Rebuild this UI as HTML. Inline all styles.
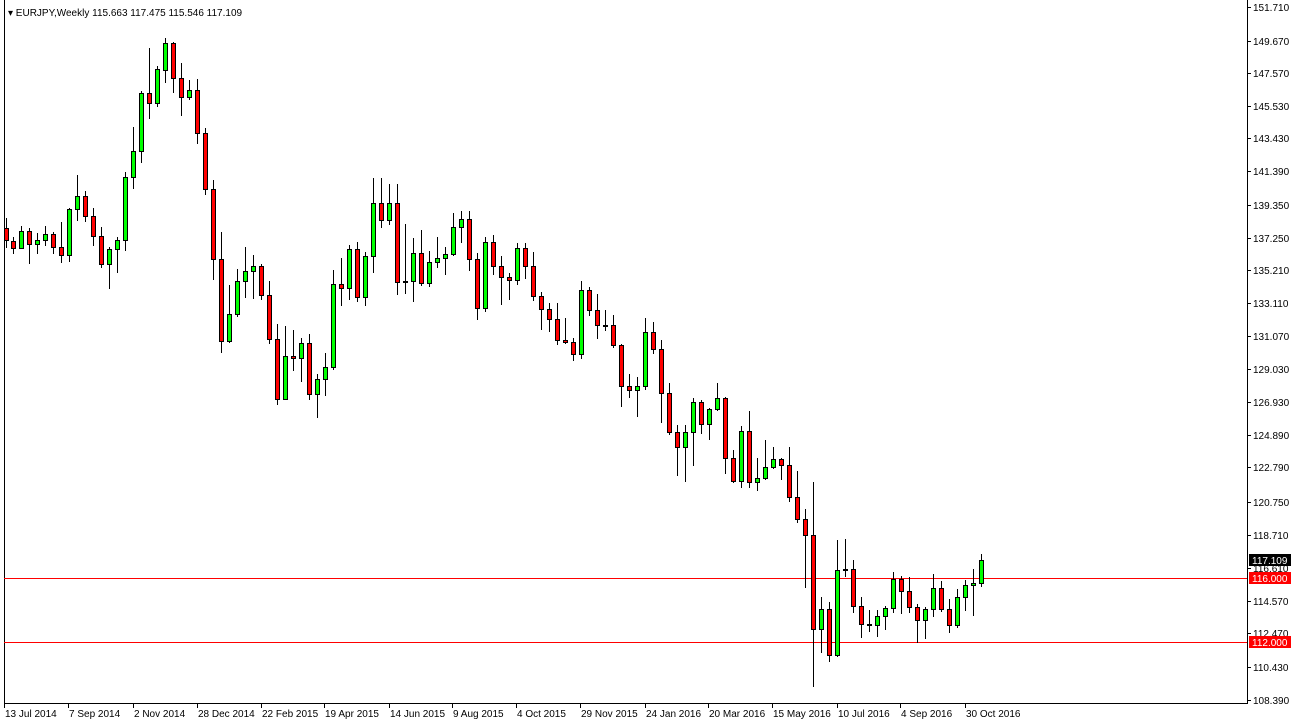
<!DOCTYPE html>
<html><head><meta charset="utf-8"><style>
html,body{margin:0;padding:0;background:#fff;width:1292px;height:726px;overflow:hidden}
svg{display:block}
text{font-family:"Liberation Sans",sans-serif;font-size:10px;fill:#000}
</style></head><body>
<svg id="s" width="1292" height="726" xmlns="http://www.w3.org/2000/svg">
<rect x="0" y="0" width="1292" height="726" fill="#fff"/>
<line x1="4.5" y1="0" x2="4.5" y2="703" stroke="#000"/>
<line x1="1247.5" y1="0" x2="1247.5" y2="704" stroke="#000"/>
<line x1="4" y1="703.5" x2="1248" y2="703.5" stroke="#000"/>
<line x1="4" y1="578.5" x2="1247" y2="578.5" stroke="#f00"/>
<line x1="4" y1="642.5" x2="1247" y2="642.5" stroke="#f00"/>
<g id="c"></g>
<text x="8" y="16">▾ EURJPY,Weekly  115.663 117.475 115.546 117.109</text>
<g id="ax"></g>
<rect x="1249" y="554" width="42" height="12" fill="#000"/>
<text x="1252" y="564" style="fill:#fff">117.109</text>
<rect x="1249" y="572" width="42" height="12" fill="#f00"/>
<text x="1252" y="582" style="fill:#fff">116.000</text>
<rect x="1249" y="636" width="42" height="12" fill="#f00"/>
<text x="1252" y="646" style="fill:#fff">112.000</text>
</svg>
<script>
var D=[
[6,218,228,240,247,0],[13,237,241,248,253,0],[21,226,248,231,248,1],[29,228,231,244,263,0],[37,233,244,240,253,1],[45,226,240,234,245,1],[53,232,234,247,253,0],[61,222,247,255,262,0],[69,208,255,209,261,1],[77,175,209,196,220,1],[85,191,196,216,221,0],[93,208,216,236,245,0],[101,227,236,264,267,0],[109,247,264,249,288,1],[117,237,249,240,272,1],[125,172,240,177,250,1],[133,127,177,151,188,1],[141,91,151,93,162,1],[149,48,93,103,118,0],[157,66,103,69,106,1],[165,38,70,43,82,1],[173,42,43,78,92,0],[181,63,78,97,115,0],[189,80,97,90,99,1],[197,79,90,133,143,0],[205,128,133,189,194,0],[213,180,189,259,279,0],[221,232,259,341,352,0],[229,285,341,314,342,1],[237,269,314,281,316,1],[245,247,281,271,297,1],
[253,255,271,266,298,1],[261,264,266,295,299,0],[269,281,295,339,343,0],[277,324,339,399,404,0],[285,326,399,356,399,1],[293,330,356,358,370,0],[301,338,358,343,381,1],[309,334,343,394,399,0],[317,374,394,379,417,1],[325,353,379,367,395,1],[333,270,367,284,369,1],[341,258,284,288,305,0],[349,245,288,249,299,1],[357,242,249,297,301,0],[365,252,297,256,305,1],[373,178,256,203,272,1],[381,178,203,220,227,0],[389,184,220,203,224,1],[397,184,203,282,294,0],[405,224,281,282,293,0],[413,238,281,253,301,1],[421,230,253,283,285,0],[429,251,283,262,286,1],[437,237,262,258,267,1],[445,247,258,254,274,1],[453,213,254,227,255,1],[461,211,227,219,242,1],[469,211,219,259,270,0],[477,253,259,308,319,0],[485,237,308,242,311,1],
[493,235,242,266,274,0],[501,256,266,277,304,0],[509,273,277,280,299,0],[517,243,280,248,284,1],[525,243,248,266,278,0],[533,252,266,296,300,0],[541,292,296,309,329,0],[549,303,309,319,331,0],[557,303,319,340,344,0],[565,318,340,342,343,0],[573,338,342,354,360,0],[581,281,354,290,358,1],[589,287,290,310,315,0],[597,294,310,325,338,0],[605,310,325,325,330,0],[613,315,325,345,347,0],[621,344,345,386,406,0],[629,374,386,390,397,0],[637,377,390,386,416,1],[645,318,386,332,389,1],[653,322,332,349,353,0],[661,340,349,393,422,0],[669,383,393,432,434,0],[677,425,432,447,475,0],[685,425,447,432,481,1],[693,398,432,402,465,1],[701,400,402,424,433,0],[709,408,424,409,439,1],[717,383,409,398,410,1],[725,397,398,458,473,0],
[733,450,458,481,482,0],[741,426,481,431,487,1],[749,411,431,482,487,0],[757,458,482,478,490,1],[765,440,478,467,479,1],[773,447,467,459,468,1],[781,458,459,465,479,0],[789,447,465,497,501,0],[797,471,497,519,522,0],[805,509,519,535,587,0],[813,482,535,629,686,0],[821,597,629,609,652,1],[829,602,609,655,661,0],[837,540,655,570,656,1],[845,539,569,570,576,0],[853,560,569,606,612,0],[861,597,606,624,637,0],[869,610,624,625,631,0],[877,610,625,616,636,1],[885,606,616,608,629,1],[893,572,608,579,612,1],[901,576,579,591,613,0],[909,577,591,607,612,0],[917,604,607,620,642,0],[925,607,620,609,638,1],[933,574,609,588,616,1],[941,581,588,609,611,0],[949,599,609,625,632,0],[957,589,625,597,627,1],[965,580,597,585,610,1],[973,569,585,583,615,1],[981,554,583,560,586,1]];
var NS="http://www.w3.org/2000/svg",g=document.getElementById("c"),h="";
D.forEach(function(d){var x=d[0],t=Math.min(d[2],d[3]),b=Math.max(d[2],d[3]);
h+='<line x1="'+(x+0.5)+'" y1="'+d[1]+'" x2="'+(x+0.5)+'" y2="'+(d[4]+1)+'" stroke="#000"/>';
h+='<rect x="'+(x-1.5)+'" y="'+(t+0.5)+'" width="4" height="'+Math.max(b-t,1)+'" fill="'+(d[5]?'#00ff00':'#ff0000')+'" stroke="#000"/>';});
g.innerHTML=h;
var L=["151.710","149.670","147.570","145.530","143.430","141.390","139.350","137.250","135.210","133.110","131.070","129.030","126.930","124.890","122.790","120.750","118.710","116.610","114.570","112.470","110.430","108.390"];
var Y=[7,41,73,106,138,171,205,238,270,303,336,369,402,435,467,502,535,568,601,633,667,700];
var a="";L.forEach(function(l,i){a+='<line x1="1248" y1="'+(Y[i]+0.5)+'" x2="1251" y2="'+(Y[i]+0.5)+'" stroke="#000"/><text x="1253" y="'+(Y[i]+4)+'">'+l+'</text>';});
var B=[["13 Jul 2014",4],["7 Sep 2014",68],["2 Nov 2014",133],["28 Dec 2014",197],["22 Feb 2015",261],["19 Apr 2015",324],["14 Jun 2015",389],["9 Aug 2015",452],["4 Oct 2015",516],["29 Nov 2015",580],["24 Jan 2016",645],["20 Mar 2016",708],["15 May 2016",772],["10 Jul 2016",837],["4 Sep 2016",900],["30 Oct 2016",965]];
B.forEach(function(b){a+='<line x1="'+(b[0]==""?0:b[1]+0.5)+'" y1="704" x2="'+(b[1]+0.5)+'" y2="708" stroke="#000"/><text x="'+(b[1]+1)+'" y="717">'+b[0]+'</text>';});
document.getElementById("ax").innerHTML=a;
</script>
</body></html>
